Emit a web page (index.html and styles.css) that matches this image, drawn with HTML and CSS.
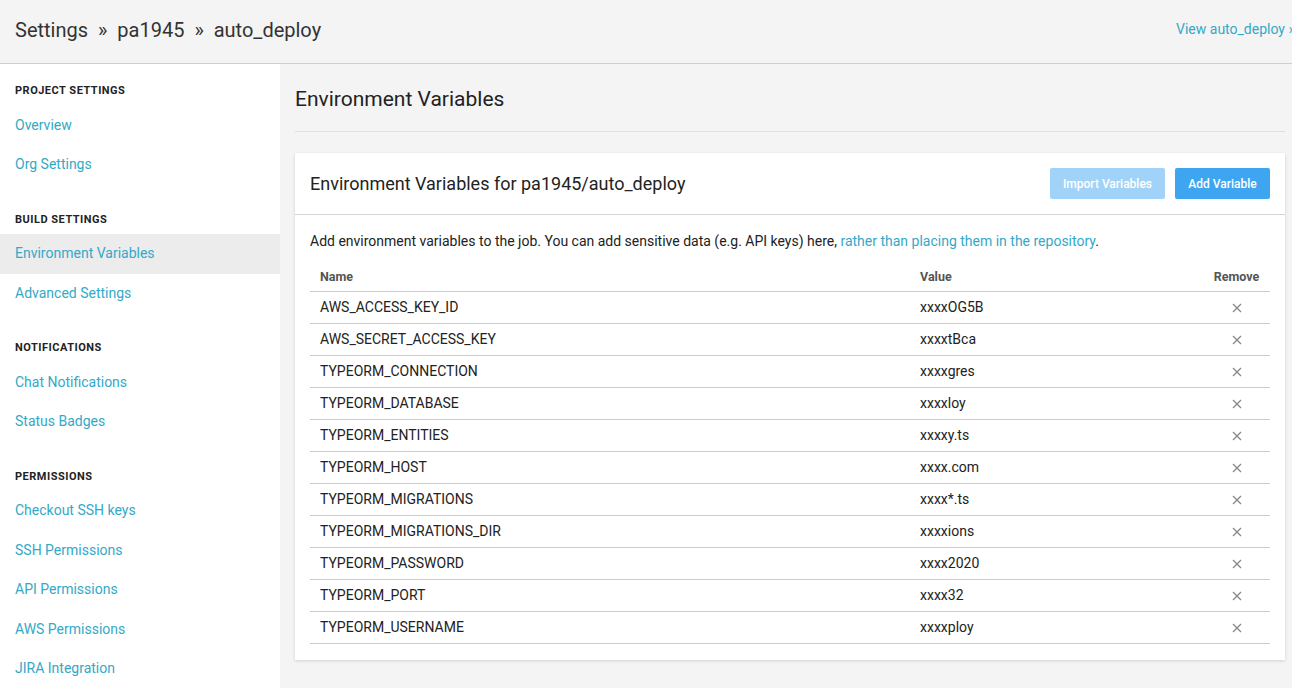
FILE: index.html
```html
<!DOCTYPE html>
<html>
<head>
<meta charset="utf-8">
<link rel="stylesheet" href="styles.css">
</head>
<body>
<header class="topbar">
  <h1 class="crumbs">Settings <span class="sep">»</span> pa1945 <span class="sep">»</span> auto_deploy</h1>
  <a class="view-link" href="#">View auto_deploy »</a>
</header>
<div class="layout">
  <nav class="sidebar">
    <div class="group">
      <div class="group-title">Project Settings</div>
      <a class="nav-item" href="#">Overview</a>
      <a class="nav-item" href="#">Org Settings</a>
    </div>
    <div class="group">
      <div class="group-title">Build Settings</div>
      <a class="nav-item active" href="#">Environment Variables</a>
      <a class="nav-item" href="#">Advanced Settings</a>
    </div>
    <div class="group">
      <div class="group-title">Notifications</div>
      <a class="nav-item" href="#">Chat Notifications</a>
      <a class="nav-item" href="#">Status Badges</a>
    </div>
    <div class="group">
      <div class="group-title">Permissions</div>
      <a class="nav-item" href="#">Checkout SSH keys</a>
      <a class="nav-item" href="#">SSH Permissions</a>
      <a class="nav-item" href="#">API Permissions</a>
      <a class="nav-item" href="#">AWS Permissions</a>
      <a class="nav-item" href="#">JIRA Integration</a>
    </div>
  </nav>
  <main class="content">
    <h2 class="page-title">Environment Variables</h2>
    <div class="divider"></div>
    <section class="card">
      <div class="card-header">
        <h3 class="card-title">Environment Variables for pa1945/auto_deploy</h3>
        <div class="actions">
          <button class="btn btn-disabled">Import Variables</button>
          <button class="btn btn-primary">Add Variable</button>
        </div>
      </div>
      <div class="card-body">
        <p class="intro">Add environment variables to the job. You can add sensitive data (e.g. API keys) here, <a href="#">rather than placing them in the repository</a>.</p>
        <table class="vars">
          <colgroup><col class="c-name"><col class="c-value"><col class="c-remove"></colgroup>
          <thead>
            <tr><th>Name</th><th>Value</th><th class="rm">Remove</th></tr>
          </thead>
          <tbody>
            <tr><td>AWS_ACCESS_KEY_ID</td><td>xxxxOG5B</td><td class="rm"><svg class="x" viewBox="0 0 10 10"><path d="M1 1L9 9M9 1L1 9"/></svg></td></tr>
            <tr><td>AWS_SECRET_ACCESS_KEY</td><td>xxxxtBca</td><td class="rm"><svg class="x" viewBox="0 0 10 10"><path d="M1 1L9 9M9 1L1 9"/></svg></td></tr>
            <tr><td>TYPEORM_CONNECTION</td><td>xxxxgres</td><td class="rm"><svg class="x" viewBox="0 0 10 10"><path d="M1 1L9 9M9 1L1 9"/></svg></td></tr>
            <tr><td>TYPEORM_DATABASE</td><td>xxxxloy</td><td class="rm"><svg class="x" viewBox="0 0 10 10"><path d="M1 1L9 9M9 1L1 9"/></svg></td></tr>
            <tr><td>TYPEORM_ENTITIES</td><td>xxxxy.ts</td><td class="rm"><svg class="x" viewBox="0 0 10 10"><path d="M1 1L9 9M9 1L1 9"/></svg></td></tr>
            <tr><td>TYPEORM_HOST</td><td>xxxx.com</td><td class="rm"><svg class="x" viewBox="0 0 10 10"><path d="M1 1L9 9M9 1L1 9"/></svg></td></tr>
            <tr><td>TYPEORM_MIGRATIONS</td><td>xxxx*.ts</td><td class="rm"><svg class="x" viewBox="0 0 10 10"><path d="M1 1L9 9M9 1L1 9"/></svg></td></tr>
            <tr><td>TYPEORM_MIGRATIONS_DIR</td><td>xxxxions</td><td class="rm"><svg class="x" viewBox="0 0 10 10"><path d="M1 1L9 9M9 1L1 9"/></svg></td></tr>
            <tr><td>TYPEORM_PASSWORD</td><td>xxxx2020</td><td class="rm"><svg class="x" viewBox="0 0 10 10"><path d="M1 1L9 9M9 1L1 9"/></svg></td></tr>
            <tr><td>TYPEORM_PORT</td><td>xxxx32</td><td class="rm"><svg class="x" viewBox="0 0 10 10"><path d="M1 1L9 9M9 1L1 9"/></svg></td></tr>
            <tr><td>TYPEORM_USERNAME</td><td>xxxxploy</td><td class="rm"><svg class="x" viewBox="0 0 10 10"><path d="M1 1L9 9M9 1L1 9"/></svg></td></tr>
          </tbody>
        </table>
      </div>
    </section>
  </main>
</div>
</body>
</html>
```
FILE: styles.css
```css
* { box-sizing: border-box; }
html, body { margin: 0; padding: 0; }
body {
  font-family: Roboto, "Liberation Sans", sans-serif;
  color: #333;
  background: #f4f4f4;
  height: 688px;
  overflow: hidden;
}
a { color: #33a9c7; text-decoration: none; }

.topbar {
  height: 64px;
  background: #f4f4f4;
  border-bottom: 1px solid #cfcfcf;
  display: flex;
  align-items: center;
  justify-content: space-between;
  padding: 0 0 0 15px;
}
.crumbs {
  margin: 0;
  font-size: 20px;
  font-weight: 400;
  color: #333;
  line-height: 28px;
  padding-bottom: 4px;
}
.sep { margin: 0 5px; }
.view-link {
  font-size: 14px;
  white-space: nowrap;
  margin-right: -3px;
  padding-bottom: 6px;
}

.layout { display: flex; height: 624px; }

.sidebar {
  width: 280px;
  flex: none;
  background: #fff;
}
.group { padding: 19px 0 8px; }
.group-title {
  font-size: 11px;
  font-weight: 700;
  text-transform: uppercase;
  letter-spacing: 0.5px;
  color: #222;
  line-height: 16px;
  padding: 0 15px;
  margin-bottom: 6.5px;
}
.nav-item {
  display: block;
  font-size: 14px;
  line-height: 19.5px;
  padding: 10px 15px;
}
.nav-item.active { background: #ececec; }

.content {
  flex: 1;
  padding: 21px 7px 0 15px;
}
.page-title {
  margin: 0;
  font-size: 21px;
  font-weight: 400;
  line-height: 28px;
  color: #222;
}
.divider {
  height: 1px;
  background: #e0e0e0;
  margin: 18px 0 21px;
}

.card {
  background: #fff;
  box-shadow: 0 1px 3px rgba(0,0,0,0.15);
}
.card-header {
  display: flex;
  align-items: center;
  justify-content: space-between;
  padding: 15px;
  border-bottom: 1px solid #d4d4d4;
}
.card-title {
  margin: 0;
  font-size: 18px;
  font-weight: 400;
  color: #222;
}
.actions { display: flex; gap: 10px; }
.btn {
  font-family: Roboto, "Liberation Sans", sans-serif;
  font-size: 12px;
  font-weight: 500;
  color: #fff;
  border: none;
  border-radius: 2px;
  height: 31px;
  padding: 0;
  white-space: nowrap;
}
.btn-disabled { background: #a1d3f8; width: 115px; }
.btn-primary { background: #3ea6f1; width: 95px; }

.card-body { padding: 16px 15px 16px; }
.intro {
  margin: 0 0 9px;
  font-size: 14px;
  line-height: 20px;
  color: #222;
}
.vars {
  width: 100%;
  border-collapse: collapse;
  table-layout: fixed;
}
.c-name { width: 600px; }
.c-remove { width: 67px; }
.vars th {
  text-align: left;
  font-size: 12.5px;
  font-weight: 700;
  color: #555;
  height: 31px;
  padding: 3px 10px 0;
  border-bottom: 1px solid #cdcdcd;
}
.vars td {
  font-size: 14px;
  color: #222;
  height: 32px;
  padding: 0 10px;
  border-bottom: 1px solid #cdcdcd;
}
.vars .rm { text-align: center; }
.x {
  width: 10px;
  height: 10px;
  vertical-align: middle;
  fill: none;
  stroke: #8a8a8a;
  stroke-width: 1.4;
}
```
